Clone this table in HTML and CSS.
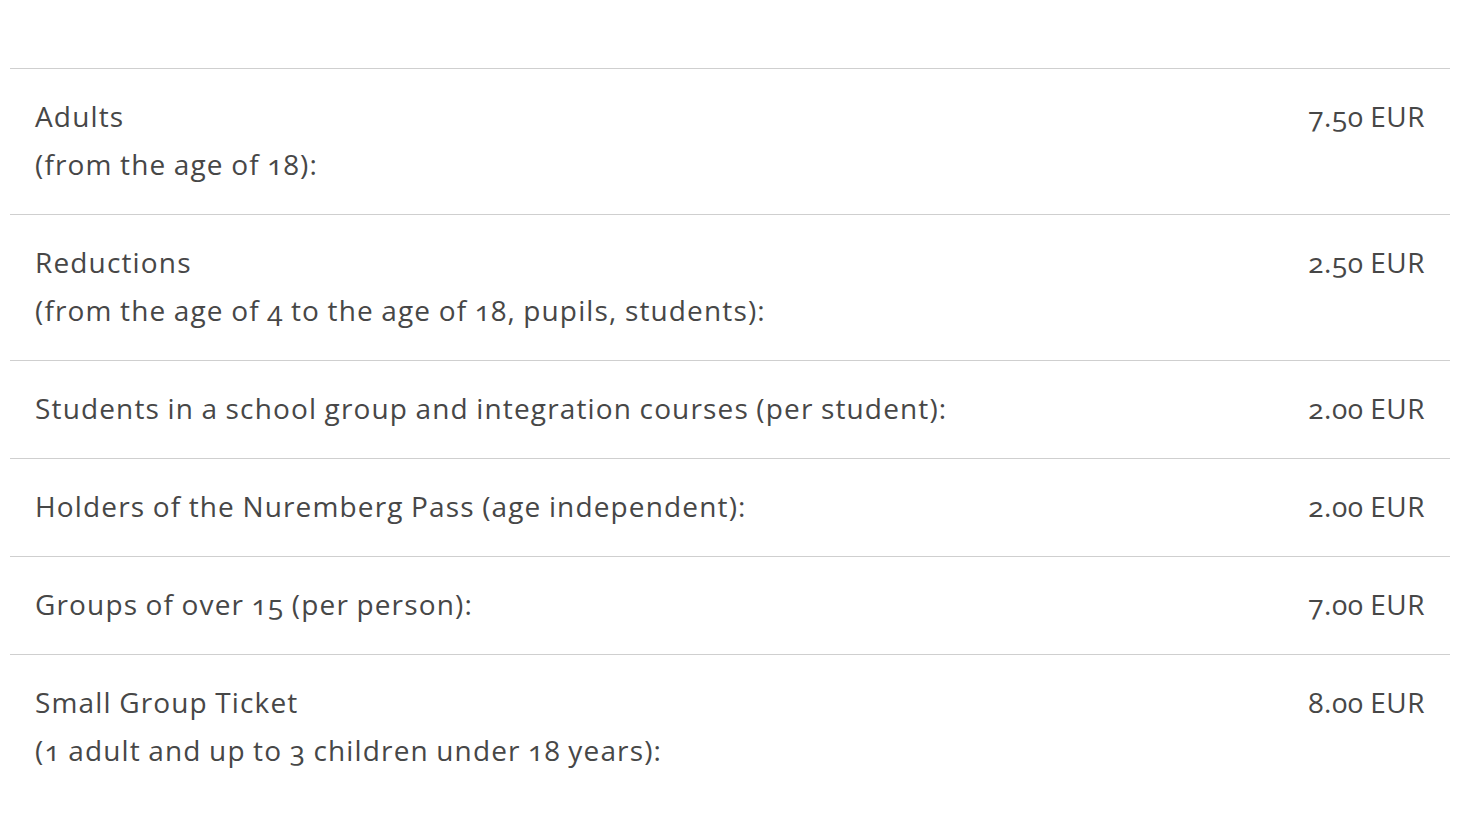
FILE: index.html
```html
<!DOCTYPE html>
<html lang="en">
<head>
<meta charset="utf-8">
<title>Prices</title>
<link rel="stylesheet" href="styles.css">
</head>
<body>
<div class="page">
  <table class="prices">
    <tr><td class="label">Adults<br>(from the age of 18):</td><td class="price">7.50 EUR</td></tr>
    <tr><td class="label">Reductions<br>(from the age of 4 to the age of 18, pupils, students):</td><td class="price">2.50 EUR</td></tr>
    <tr><td class="label">Students in a school group and integration courses (per student):</td><td class="price">2.00 EUR</td></tr>
    <tr><td class="label">Holders of the Nuremberg Pass (age independent):</td><td class="price">2.00 EUR</td></tr>
    <tr><td class="label">Groups of over 15 (per person):</td><td class="price">7.00 EUR</td></tr>
    <tr class="last"><td class="label">Small Group Ticket<br>(1 adult and up to 3 children under 18 years):</td><td class="price">8.00 EUR</td></tr>
  </table>
</div>
</body>
</html>
```

FILE: styles.css
```css
html, body {
  margin: 0;
  padding: 0;
  background: #fff;
}
.page {
  padding: 68px 26px 0 10px;
}
.prices {
  width: 100%;
  border-collapse: collapse;
  font-family: "Open Sans", "Noto Sans", sans-serif;
  font-size: 28px;
  font-weight: 500;
  letter-spacing: 1.15px;
  word-spacing: -1px;
  line-height: 48px;
  color: #474747;
  font-variant-numeric: oldstyle-nums;
}
.prices td {
  border-top: 1px solid #cfcfcf;
  padding: 23px 25px 26px 25px;
  vertical-align: top;
}
.prices td.price {
  text-align: right;
  white-space: nowrap;
  letter-spacing: 0.5px;
}
```
